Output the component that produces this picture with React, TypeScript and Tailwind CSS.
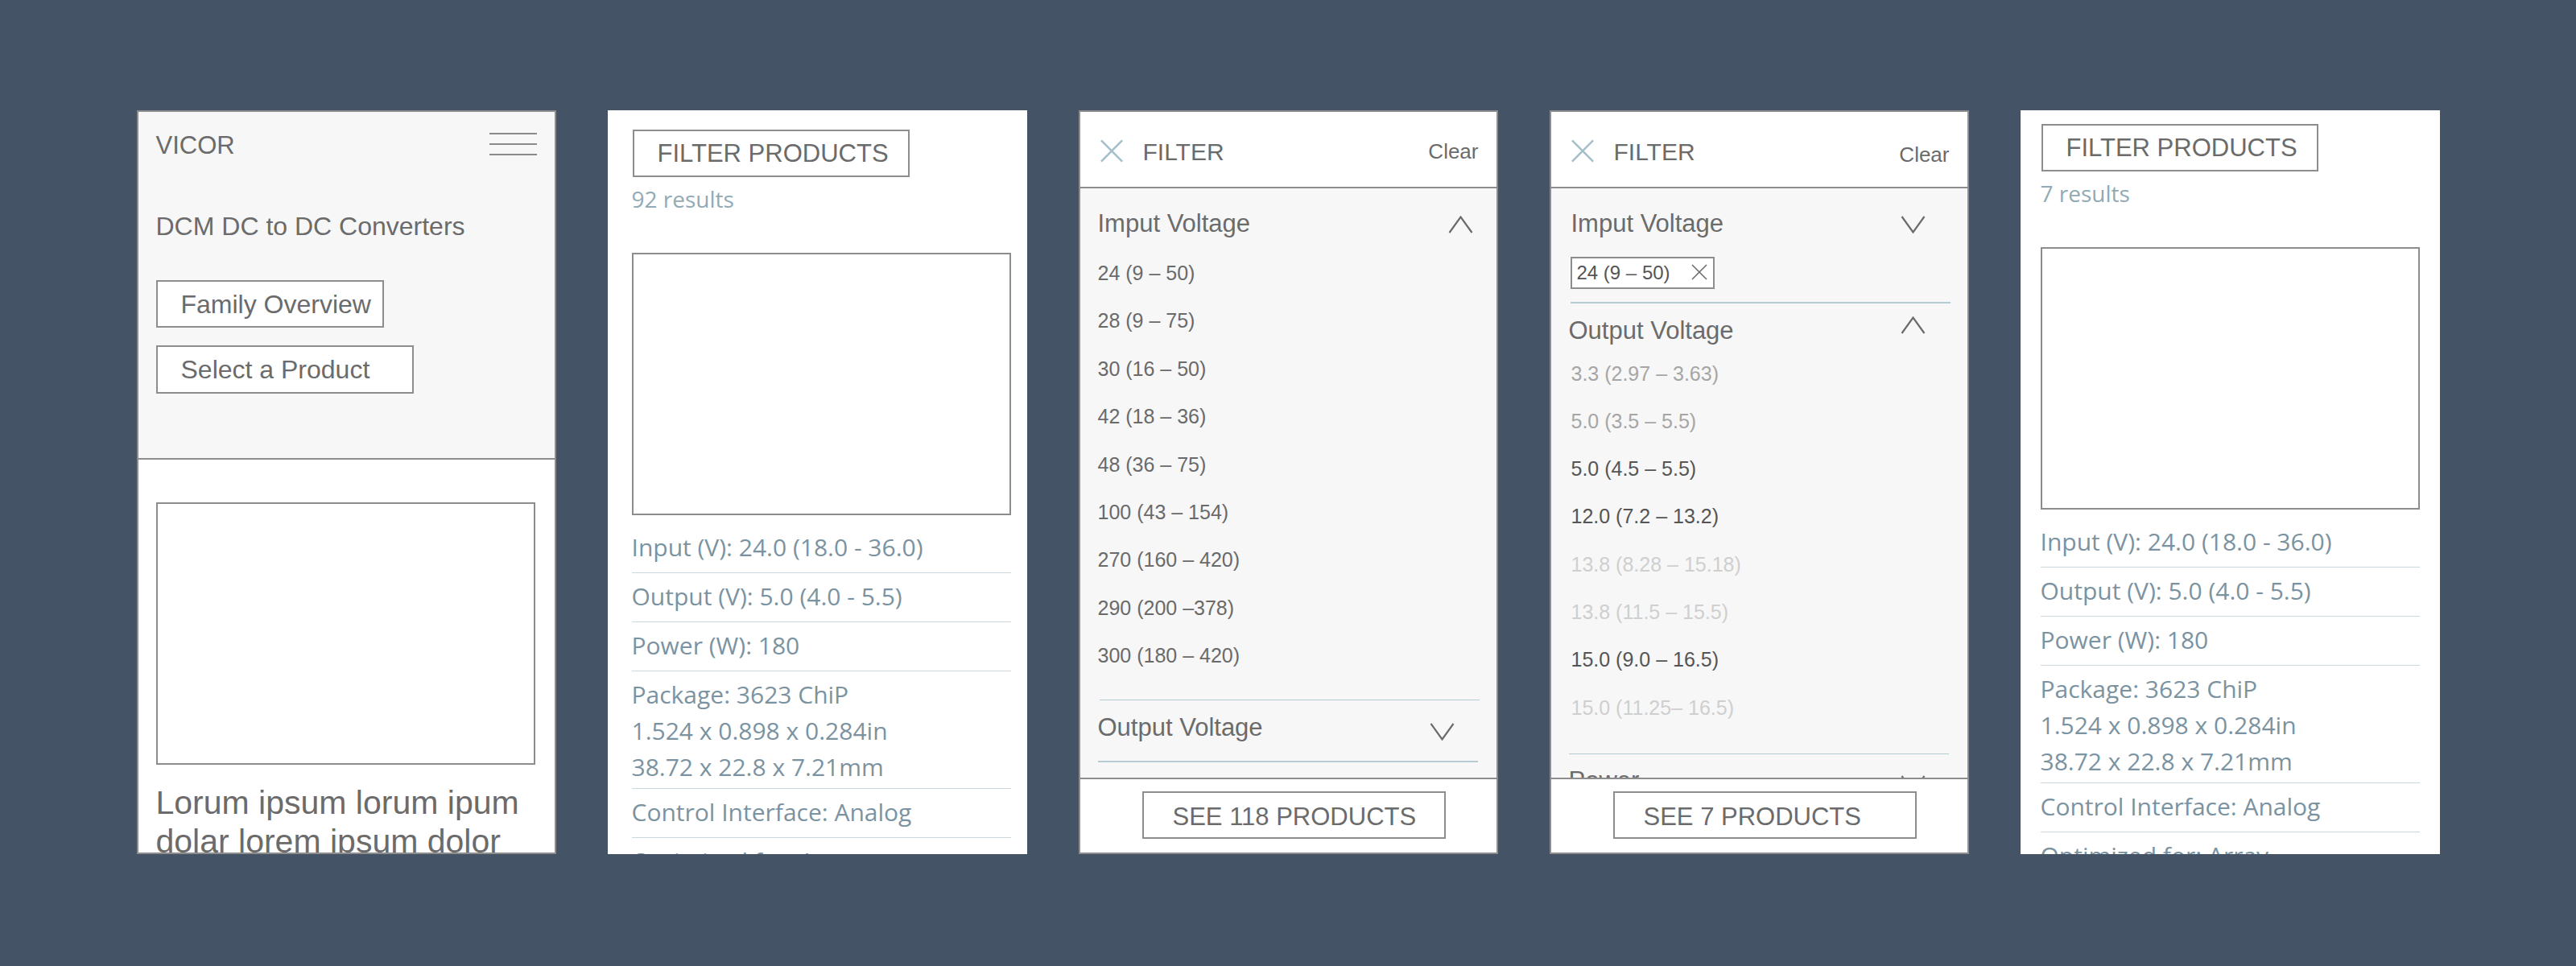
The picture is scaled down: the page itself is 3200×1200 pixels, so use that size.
import React from "react";

const ARIAL = "font-['Liberation_Sans',Arial,sans-serif]";
const HUMAN = "font-['Open_Sans',sans-serif]";

function Chevron({ dir }: { dir: "up" | "down" }) {
  return (
    <svg viewBox="0 0 31 22" className="w-[31px] h-[22px] shrink-0" fill="none" stroke="#6b6b6b" strokeWidth={2.2}>
      {dir === "up" ? <polyline points="1.5,21 15.5,1.5 29.5,21" /> : <polyline points="1.5,1 15.5,20.5 29.5,1" />}
    </svg>
  );
}

function CloseIcon() {
  return (
    <svg viewBox="0 0 30 30" className="w-[30px] h-[29px] shrink-0 mt-[34px]" stroke="#a4bfc9" strokeWidth={2.6}>
      <line x1="1.5" y1="1.5" x2="28.5" y2="28.5" />
      <line x1="28.5" y1="1.5" x2="1.5" y2="28.5" />
    </svg>
  );
}

const specs = [
  ["Input (V): 24.0 (18.0 - 36.0)"],
  ["Output (V): 5.0 (4.0 - 5.5)"],
  ["Power (W): 180"],
  ["Package: 3623 ChiP", "1.524 x 0.898 x 0.284in", "38.72 x 22.8 x 7.21mm"],
  ["Control Interface: Analog"],
  ["Optimized for: Array"],
];

// first screen: family landing
function FamilyPanel() {
  return (
    <div className={`w-[521px] h-[924px] shrink-0 border-2 border-[#8d8d8d] bg-white overflow-hidden ${ARIAL}`}>
      <div className="h-[432px] bg-[#f7f7f7] border-b-2 border-[#8d8d8d] px-[22px] pt-[26px]">
        <div className="flex justify-between items-start">
          <span className="text-[31px] leading-[31px] text-[#6b6b6b]">VICOR</span>
          <div className="w-[59px] h-[28px] flex flex-col justify-between">
            <div className="h-[2px] bg-[#8a8a8a]" />
            <div className="h-[2px] bg-[#8a8a8a]" />
            <div className="h-[2px] bg-[#8a8a8a]" />
          </div>
        </div>
        <div className="mt-[69px] text-[32px] leading-[32px] text-[#6b6b6b]">DCM DC to DC Converters</div>
        <div className="mt-[51px] w-[283px] h-[59px] border-2 border-[#8d8d8d] bg-white flex items-center pl-[29px] text-[32px] leading-[32px] text-[#6b6b6b]">
          Family Overview
        </div>
        <div className="mt-[22px] w-[320px] h-[60px] border-2 border-[#8d8d8d] bg-white flex items-center pl-[29px] text-[32px] leading-[32px] text-[#6b6b6b]">
          Select a Product
        </div>
      </div>
      <div className="px-[22px]">
        <div className="mt-[53px] w-[471px] h-[326px] border-2 border-[#8d8d8d]" />
        <p className="mt-[23px] w-[471px] text-[41px] leading-[48px] text-[#6b6b6b]">
          Lorum ipsum lorum ipum dolar lorem ipsum dolor sit amet
        </p>
      </div>
    </div>
  );
}

// results list screen
function ResultsPanel({ count, padL, top }: { count: string; padL: string; top: string }) {
  return (
    <div className={`w-[521px] h-[924px] shrink-0 bg-white overflow-hidden ${padL} ${top}`}>
      <div className={`ml-[1px] w-[344px] h-[59px] border-2 border-[#8d8d8d] flex items-center pl-[29px] text-[31px] leading-[31px] text-[#6b6b6b] ${ARIAL}`}>
        FILTER PRODUCTS
      </div>
      <div className={`mt-[13px] text-[28px] leading-[28px] text-[#91aab6] ${HUMAN}`}>{count} results</div>
      <div className="mt-[53px] w-[471px] h-[326px] border-2 border-[#8d8d8d]" />
      <div className={`mt-[11px] w-[471px] ${HUMAN}`}>
        {specs.map((lines, i) => (
          <div key={i} className={`pt-[6px] border-b border-[#cbd8de] ${lines.length > 1 ? "pb-[4px]" : "pb-[9px]"}`}>
            {lines.map((l) => (
              <div key={l} className="text-[30px] leading-[45px] text-[#7b93a1] whitespace-nowrap">
                {l}
              </div>
            ))}
          </div>
        ))}
      </div>
    </div>
  );
}

function FilterHeader({ clearTop }: { clearTop: string }) {
  return (
    <div className="h-[95px] shrink-0 border-b-2 border-[#8d8d8d] bg-white flex items-start pl-[24px] pr-[22px]">
      <CloseIcon />
      <span className="ml-[24px] mt-[35px] text-[30px] leading-[30px] text-[#6b6b6b]">FILTER</span>
      <span className={`ml-auto text-[26px] leading-[26px] text-[#6b6b6b] ${clearTop}`}>Clear</span>
    </div>
  );
}

function FilterFooter({ label }: { label: string }) {
  return (
    <div className="h-[93px] shrink-0 border-t-2 border-[#8d8d8d] bg-white pl-[77px] pt-[15px]">
      <div className="w-[377px] h-[59px] border-2 border-[#8d8d8d] flex items-center pl-[36px] pt-[4px] text-[31px] leading-[31px] text-[#6b6b6b] whitespace-nowrap">
        {label}
      </div>
    </div>
  );
}

const inputs = [
  "24 (9 – 50)",
  "28 (9 – 75)",
  "30 (16 – 50)",
  "42 (18 – 36)",
  "48 (36 – 75)",
  "100 (43 – 154)",
  "270 (160 – 420)",
  "290 (200 –378)",
  "300 (180 – 420)",
];

function FilterOpenPanel() {
  return (
    <div className={`w-[521px] h-[924px] shrink-0 border-2 border-[#8d8d8d] bg-white overflow-hidden flex flex-col ${ARIAL}`}>
      <FilterHeader clearTop="mt-[36px]" />
      <div className="flex-1 overflow-hidden bg-[#f7f7f7] pt-[28px]">
        <div className="flex items-start justify-between pl-[22px] pr-[29px]">
          <span className="text-[31px] leading-[31px] text-[#6b6b6b]">Imput Voltage</span>
          <div className="mt-[6px]">
            <Chevron dir="up" />
          </div>
        </div>
        <div className="mt-[17px] pl-[22px]">
          {inputs.map((v) => (
            <div key={v} className="h-[59.4px] leading-[59.4px] text-[25px] text-[#6a6a6a]">
              {v}
            </div>
          ))}
        </div>
        <div className="mt-[24px] ml-[24px] w-[472px] h-[1.5px] bg-[#b6cad3]" />
        <div className="mt-[18px] flex items-start justify-between pl-[22px] pr-[52px]">
          <span className="text-[31px] leading-[31px] text-[#6b6b6b]">Output Voltage</span>
          <div className="mt-[10px]">
            <Chevron dir="down" />
          </div>
        </div>
        <div className="mt-[25px] ml-[22px] w-[472px] h-[1.5px] bg-[#b6cad3]" />
      </div>
      <FilterFooter label="SEE 118 PRODUCTS" />
    </div>
  );
}

const outputs: [string, string][] = [
  ["3.3 (2.97 – 3.63)", "text-[#a6a6a6]"],
  ["5.0 (3.5 – 5.5)", "text-[#a6a6a6]"],
  ["5.0 (4.5 – 5.5)", "text-[#555555]"],
  ["12.0 (7.2 – 13.2)", "text-[#555555]"],
  ["13.8 (8.28 – 15.18)", "text-[#cfcfcf]"],
  ["13.8 (11.5 – 15.5)", "text-[#cfcfcf]"],
  ["15.0 (9.0 – 16.5)", "text-[#555555]"],
  ["15.0 (11.25– 16.5)", "text-[#cfcfcf]"],
];

function FilterSelectedPanel() {
  return (
    <div className={`w-[521px] h-[924px] shrink-0 border-2 border-[#8d8d8d] bg-white overflow-hidden flex flex-col ${ARIAL}`}>
      <FilterHeader clearTop="mt-[40px]" />
      <div className="flex-1 overflow-hidden bg-[#f7f7f7] pt-[28px]">
        <div className="flex items-start justify-between pl-[25px] pr-[52px]">
          <span className="text-[31px] leading-[31px] text-[#6b6b6b]">Imput Voltage</span>
          <div className="mt-[6px]">
            <Chevron dir="down" />
          </div>
        </div>
        <div className="mt-[26px] ml-[24px] w-[179px] h-[40px] border-2 border-[#8d8d8d] bg-white flex items-center pl-[6px] pr-[7px]">
          <span className="text-[24px] leading-[24px] text-[#555555]">24 (9 – 50)</span>
          <svg viewBox="0 0 20 20" className="ml-auto w-[20px] h-[20px] mt-[-3px]" stroke="#6b6b6b" strokeWidth={1.6}>
            <line x1="1" y1="1" x2="19" y2="19" />
            <line x1="19" y1="1" x2="1" y2="19" />
          </svg>
        </div>
        <div className="mt-[16px] ml-[24px] w-[472px] h-[1.5px] bg-[#b6cad3]" />
        <div className="mt-[18px] flex items-start justify-between pl-[22px] pr-[52px]">
          <span className="text-[31px] leading-[31px] text-[#6b6b6b]">Output Voltage</span>
          <div className="mt-[-2px]">
            <Chevron dir="up" />
          </div>
        </div>
        <div className="mt-[9px] pl-[25px]">
          {outputs.map(([v, c]) => (
            <div key={v} className={`h-[59.3px] leading-[59.3px] text-[25px] ${c}`}>
              {v}
            </div>
          ))}
        </div>
        <div className="mt-[27px] ml-[22px] w-[472px] h-[1.5px] bg-[#b6cad3]" />
        <div className="mt-[17px] flex items-start justify-between pl-[22px] pr-[52px]">
          <span className="text-[31px] leading-[31px] text-[#6b6b6b]">Power</span>
          <div className="mt-[9px]">
            <Chevron dir="down" />
          </div>
        </div>
      </div>
      <FilterFooter label="SEE 7 PRODUCTS" />
    </div>
  );
}

export default function App() {
  return (
    <div className="w-[3200px] h-[1200px] bg-[#445466] flex justify-center gap-[64px] pt-[137px] overflow-hidden">
      <FamilyPanel />
      <ResultsPanel count="92" padL="pl-[30px]" top="pt-[24px]" />
      <FilterOpenPanel />
      <FilterSelectedPanel />
      <ResultsPanel count="7" padL="pl-[25px]" top="pt-[17px]" />
    </div>
  );
}
